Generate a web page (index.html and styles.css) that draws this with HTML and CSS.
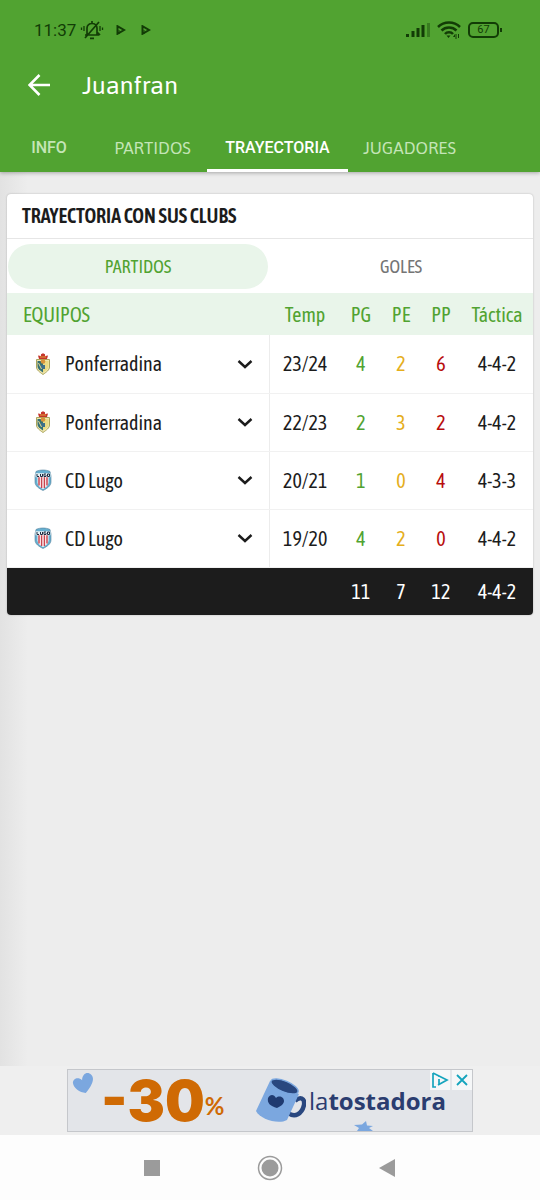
FILE: index.html
```
<!DOCTYPE html>
<html lang="es">
<head>
  <meta charset="UTF-8">
  <meta name="viewport" content="width=device-width, initial-scale=1.0">
  <title>Juanfran - Trayectoria</title>
  <link rel="stylesheet" href="styles.css">
</head>
<body>
  <svg class="symbols" aria-hidden="true">
    <symbol id="chevron" viewBox="0 0 16 10">
      <path d="M1.500 2l6.500 6 6.500-6" fill="none" stroke="#1c1c1c" stroke-width="2.400"/>
    </symbol>
    <symbol id="play" viewBox="0 0 10 10">
      <path d="M1.500 1.200v7.600L8 5z" fill="none" stroke="#123c06" stroke-width="2"/>
      <path d="M3 5v4" stroke="#123c06"/>
    </symbol>
    <symbol id="ponferradina" viewBox="0 0 16 22">
      <path d="M4 6L3 2.500 6 3V1.200l2-1 2 1V3l3-.5L12 6z" fill="#c5352b"/>
      <path d="M5 4h6" stroke="#e0a23a"/>
      <path d="M1.500 6.500h13V14c0 3-3 5-6.500 7.500C4.500 19 1.500 17 1.500 14z" fill="#f0e7ae" stroke="#aaa45c"/>
      <path d="M2.500 8H8v11.500C5 17.500 2.500 16 2.500 13z" fill="#356f73"/>
      <path d="M8 8h5.500v5c0 3-2.500 4.500-5.500 6.500z" fill="#eadb83"/>
      <circle cx="8" cy="8.500" r="2.300" fill="#d8923a"/>
      <path d="M6 12h4v4H6z" fill="#3e6f8b"/>
      <path d="M3.500 10l3 6M11 10v5" stroke="#e9d98b"/>
    </symbol>
    <symbol id="lugo" viewBox="0 0 18 22">
      <path d="M2 2.500C6 .5 12 .5 16 2.500l1 4.500v6c0 4-4 6.500-8 8.500-4-2-8-4.500-8-8.500V7z" fill="#66afd0" stroke="#54809b" stroke-width=".6"/>
      <path d="M3.500 8h11v5.500c0 3-2.500 5-5.500 6.500-3-1.500-5.500-3.500-5.500-6.500z" fill="#fff"/>
      <path d="M5 8v8.500M7.600 8v11M10.400 8v11M13 8v8.500" stroke="#c9444f" stroke-width="1.500"/>
      <path d="M1.500 4.200h15v4h-15z" fill="#e7f0f4"/>
      <path d="M3 5v2.500h2M6.500 5v2.500h2V5M12 5h-2v2.500h2V6M13.500 5h2v2.500h-2z" fill="none" stroke="#1d2c42"/>
    </symbol>
  </svg>

  <header class="app-header">
    <div class="status-bar">
      <span class="clock">11:37</span>
      <svg class="bell" viewBox="0 0 24 20">
        <g fill="none" stroke="#123c06" stroke-width="1.700">
          <path d="M5 15h14M7 15V8c0-6 10-6 10 0v7M20 15l-3-3M5 18L19 2M10 18.300h4M12 3V1"/>
          <path d="M4 6v5M1.500 7.500v2.500M20 6v5M22.500 7.500v2.500" stroke-width="1.300"/>
        </g>
      </svg>
      <svg class="play"><use href="#play"/></svg>
      <svg class="play"><use href="#play"/></svg>
      <svg class="signal" viewBox="0 0 24 16">
        <path d="M0 12h3v3H0zM5.500 9h3v6h-3zM10.500 6h3v9h-3zM15.500 3h3v12h-3z" fill="#123c06"/>
        <path d="M21 1h3v14h-3z" fill="#387c20"/>
      </svg>
      <svg class="wifi" viewBox="0 0 24 18">
        <g fill="none" stroke="#123c06" stroke-width="2.500">
          <path d="M1 6c6-6 16-6 22 0M4.500 9.500c4-4 11-4 15 0M8 13c2-2.500 6-2.500 8 0"/>
        </g>
        <path d="M9.500 14.500h4L11.500 17zM16 16l2-3v3zM18.500 13h1v5h-1zM21 13h1v4h-1z" fill="#123c06"/>
      </svg>
      <span class="battery">67</span>
    </div>
    <div class="toolbar">
      <button class="back" aria-label="Volver">
        <svg viewBox="0 0 22 22"><path d="M22 11H2M11.500 1L1.500 11l10 10" fill="none" stroke="#fff" stroke-width="2.600"/></svg>
      </button>
      <h1>Juanfran</h1>
    </div>
    <nav class="tabs">
      <a class="medium" href="#info">INFO</a>
      <a href="#partidos">PARTIDOS</a>
      <a class="medium active" href="#trayectoria">TRAYECTORIA</a>
      <a href="#jugadores">JUGADORES</a>
    </nav>
  </header>

  <main>
    <section class="card" id="trayectoria">
      <h2>TRAYECTORIA CON SUS CLUBS</h2>
      <div class="switch">
        <button class="selected">PARTIDOS</button>
        <button>GOLES</button>
      </div>
      <table>
        <colgroup>
          <col>
          <col class="col-wide">
          <col class="col-num">
          <col class="col-num">
          <col class="col-num">
          <col class="col-wide">
        </colgroup>
        <thead>
          <tr><th>EQUIPOS</th><th>Temp</th><th>PG</th><th>PE</th><th>PP</th><th>Táctica</th></tr>
        </thead>
        <tbody>
          <tr>
            <td><div class="team"><svg class="crest"><use href="#ponferradina"/></svg><span>Ponferradina</span><button aria-label="Desplegar"><svg><use href="#chevron"/></svg></button></div></td>
            <td>23/24</td><td class="won">4</td><td class="drawn">2</td><td class="lost">6</td><td>4-4-2</td>
          </tr>
          <tr>
            <td><div class="team"><svg class="crest"><use href="#ponferradina"/></svg><span>Ponferradina</span><button aria-label="Desplegar"><svg><use href="#chevron"/></svg></button></div></td>
            <td>22/23</td><td class="won">2</td><td class="drawn">3</td><td class="lost">2</td><td>4-4-2</td>
          </tr>
          <tr>
            <td><div class="team"><svg class="crest"><use href="#lugo"/></svg><span>CD Lugo</span><button aria-label="Desplegar"><svg><use href="#chevron"/></svg></button></div></td>
            <td>20/21</td><td class="won">1</td><td class="drawn">0</td><td class="lost">4</td><td>4-3-3</td>
          </tr>
          <tr>
            <td><div class="team"><svg class="crest"><use href="#lugo"/></svg><span>CD Lugo</span><button aria-label="Desplegar"><svg><use href="#chevron"/></svg></button></div></td>
            <td>19/20</td><td class="won">4</td><td class="drawn">2</td><td class="lost">0</td><td>4-4-2</td>
          </tr>
        </tbody>
        <tfoot>
          <tr><td></td><td></td><td>11</td><td>7</td><td>12</td><td>4-4-2</td></tr>
        </tfoot>
      </table>
    </section>
  </main>

  <aside class="ad-area">
    <a class="ad" href="#latostadora">
      <svg class="heart" viewBox="0 0 24 24"><path d="M15 23C8 22 2 18 1 12c0-5 6-7 10-3 0-7 6-10 10-6 5 5-1 14-6 20z" fill="#7ba7df"/></svg>
      <span class="discount">-30</span><span class="percent">%</span>
      <svg class="mug" viewBox="0 0 50 48">
        <path d="M39 24c5-5 10-3 9 4-2 9-9 13-16 8" fill="none" stroke="#29477f" stroke-width="4.500"/>
        <path d="M14 4l29 13-12 26c-9 5-27-1-31-9z" fill="#7ba7df"/>
        <ellipse cx="28.500" cy="9.500" rx="14.500" ry="5.500" transform="rotate(22 28.500 9.500)" fill="#29477f" stroke="#7ba7df" stroke-width="1.500"/>
        <path d="M21 31c-7-2-10-5-9-10 2-4 6-4 8 0 3-3 8-1 8 3 0 3-3 5-7 7z" fill="#1f3a70"/>
      </svg>
      <span class="brand">la<b>tostadora</b></span>
      <svg class="star" viewBox="0 0 20 10"><path d="M0 4l8-.5L12 0l1 4.500 6 .5-4 2 4 3H3l2-3z" fill="#7ba7df"/></svg>
      <span class="ad-choices">
        <svg viewBox="0 0 20 20"><path d="M3 3v14h3M3 3l14 7-9 5M9 9v5M9 6v1" fill="none" stroke="#14a4bd" stroke-width="1.700"/></svg>
        <svg viewBox="0 0 20 20"><path d="M5 5l10 10M15 5L5 15" stroke="#14a4bd" stroke-width="1.800"/></svg>
      </span>
    </a>
  </aside>

  <footer class="system-nav">
    <button aria-label="Recientes"><svg viewBox="0 0 26 26"><path d="M5 5h16v16H5z" fill="#9b9b9b"/></svg></button>
    <button aria-label="Inicio"><svg viewBox="0 0 26 26"><circle cx="13" cy="13" r="11.500" fill="none" stroke="#9b9b9b" stroke-width="1.500"/><circle cx="13" cy="13" r="8.500" fill="#9b9b9b"/></svg></button>
    <button aria-label="Atrás"><svg viewBox="0 0 26 26"><path d="M4 13l16-9v18z" fill="#9b9b9b"/></svg></button>
  </footer>
</body>
</html>
```
FILE: styles.css
```
* {
  box-sizing: border-box;
}
body {
  margin: 0;
  min-height: 100vh;
  display: flex;
  flex-direction: column;
  font-family: "Asap Condensed", "Open Sans Condensed", "Noto Sans Condensed", "Roboto Condensed", Roboto, sans-serif;
  font-size: 20px;
  color: #1c1c1c;
  background-color: #ededed;
}
button {
  padding: 0;
  border: none;
  background: none;
  font: inherit;
  cursor: pointer;
}
a {
  color: inherit;
  text-decoration: none;
}
svg {
  display: block;
  flex: none;
}
.symbols {
  position: absolute;
  width: 0;
  height: 0;
}

/* header */
.app-header {
  position: relative;
  background-color: #51a331;
  color: #fff;
  font-family: Roboto, sans-serif;
  box-shadow: 0 1px 4px rgba(0, 0, 0, 0.3);
}
.status-bar {
  display: flex;
  align-items: center;
  height: 60px;
  padding: 0 41px 0 34px;
  color: #123c06;
}
.clock {
  width: 46px;
  font-size: 17px;
}
.bell {
  width: 24px;
  height: 20px;
}
.play {
  width: 10px;
  height: 10px;
  margin-left: 12px;
}
.play + .play {
  margin-left: 15px;
}
.signal {
  width: 24px;
  height: 16px;
  margin-left: auto;
}
.wifi {
  width: 24px;
  height: 18px;
  margin: 0 7px;
}
.battery {
  position: relative;
  width: 31px;
  height: 16px;
  border: 2px solid #123c06;
  border-radius: 5px;
  font-size: 11px;
  line-height: 12px;
  text-align: center;
}
.battery::after {
  content: "";
  position: absolute;
  top: 4px;
  right: -5px;
  width: 2px;
  height: 4px;
  background-color: #123c06;
}
.toolbar {
  display: flex;
  align-items: center;
  height: 50px;
  padding-left: 28px;
}
.back {
  width: 22px;
  height: 22px;
}
h1 {
  margin: 0 0 0 32px;
  font-family: Asap, "Noto Sans", sans-serif;
  font-size: 25px;
  font-weight: normal;
}
.tabs {
  display: grid;
  grid-template-columns: 98px 109px 141px 123px;
  margin-top: 14px;
}
.tabs a {
  height: 48px;
  border-bottom: 3px solid transparent;
  font-family: Asap, "Noto Sans", sans-serif;
  font-size: 17px;
  line-height: 48px;
  text-align: center;
  color: #c4e5b7;
}
.tabs .medium {
  font-family: Roboto, sans-serif;
  font-size: 16px;
  font-weight: 500;
}
.tabs .active {
  border-color: #fff;
  color: #fff;
}

/* card */
main {
  flex: 1;
  padding: 22px 7px;
  background: linear-gradient(to right, #e2e2e2, #ededed 28px);
}
.card {
  overflow: hidden;
  border-radius: 4px;
  background-color: #fff;
  box-shadow: 0 0 2px rgba(0, 0, 0, 0.25);
}
h2 {
  margin: 0;
  padding-left: 15px;
  border-bottom: 1px solid #e6e6e6;
  font-size: 20px;
  font-weight: 600;
  line-height: 44px;
}
.switch {
  display: grid;
  grid-template-columns: 1fr 1fr;
  padding: 5px 1px 4px;
}
.switch button {
  height: 45px;
  border-radius: 23px;
  font-size: 18px;
  color: #757575;
}
.switch .selected {
  margin-right: 2px;
  color: #51a331;
  background-color: #e9f5ea;
}
table {
  width: 100%;
  table-layout: fixed;
  border-collapse: collapse;
  text-align: center;
}
.col-wide {
  width: 72px;
}
.col-num {
  width: 40px;
}
th, td {
  padding: 0;
}
th {
  height: 42px;
  font-weight: normal;
  color: #51a331;
  background-color: #e9f5ea;
}
th:first-child {
  padding-left: 16px;
  text-align: left;
}
tbody td {
  height: 58px;
  border-bottom: 1px solid #f1f1f1;
}
tbody td:first-child {
  border-right: 1px solid #ececec;
}
.team {
  display: flex;
  align-items: center;
  padding: 0 16px 0 27px;
}
.crest {
  width: 18px;
  height: 22px;
  margin-right: 13px;
}
.team button {
  margin-left: auto;
}
.team button svg {
  width: 16px;
  height: 10px;
}
.won {
  color: #51a331;
}
.drawn {
  color: #e5ae1c;
}
.lost {
  color: #b80d0d;
}
tfoot td {
  height: 48px;
  color: #fff;
  background-color: #1c1c1c;
}

/* ad */
.ad-area {
  padding: 3px 0;
  background-color: #efefef;
}
.ad {
  position: relative;
  display: flex;
  align-items: center;
  width: 406px;
  height: 63px;
  margin: 0 auto;
  padding-left: 33px;
  border: 1px solid #c5c7cb;
  background-color: #e3e5e9;
}
.heart {
  position: absolute;
  top: 2px;
  left: 4px;
  width: 22px;
  height: 22px;
}
.discount {
  font-family: Inter, Roboto, sans-serif;
  font-size: 56px;
  font-weight: 900;
  line-height: 60px;
  color: #cf6a04;
}
.percent {
  padding-top: 10px;
  font-family: Lato, sans-serif;
  font-size: 24px;
  font-weight: bold;
  color: #cf6a04;
}
.mug {
  width: 50px;
  height: 48px;
  margin-left: auto;
}
.brand {
  width: 166px;
  padding-left: 3px;
  font-family: "Open Sans", sans-serif;
  font-size: 24px;
  color: #2b3d70;
}
.star {
  position: absolute;
  right: 98px;
  bottom: 0;
  width: 20px;
  height: 10px;
}
.ad-choices {
  position: absolute;
  top: 0;
  right: 0;
  display: flex;
  gap: 2px;
}
.ad-choices svg {
  width: 20px;
  height: 20px;
  background-color: #f5f7f8;
}

/* system navigation */
.system-nav {
  display: flex;
  justify-content: center;
  align-items: center;
  gap: 92px;
  height: 65px;
  background-color: #fdfdfd;
}
.system-nav button svg {
  width: 26px;
  height: 26px;
}
```
